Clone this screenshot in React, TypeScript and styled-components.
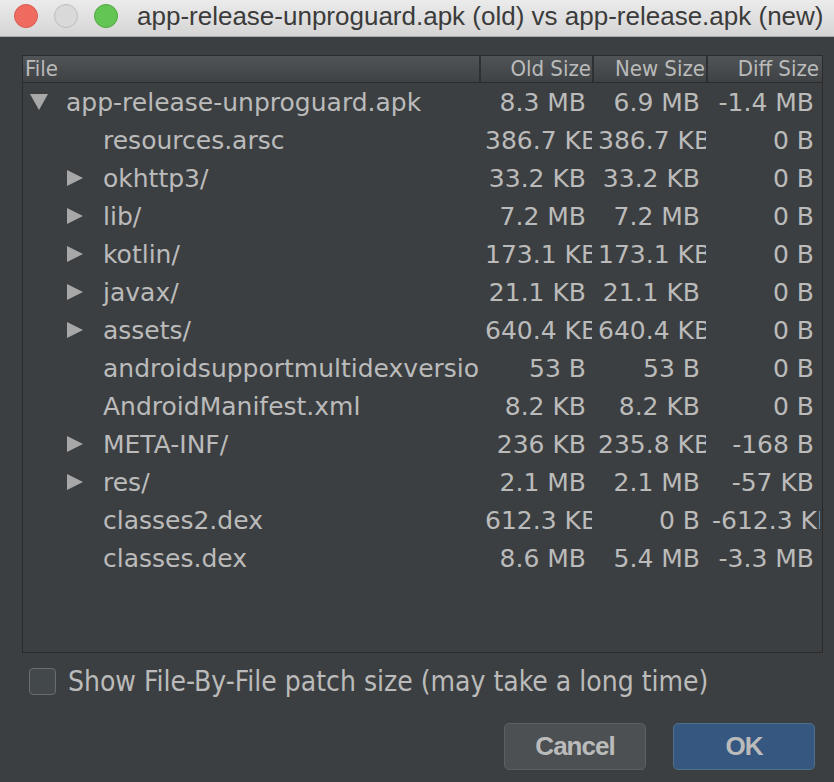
import React from 'react';
import styled, { createGlobalStyle } from 'styled-components';

interface Entry {
  name: string;
  level: number;
  toggle?: 'open' | 'closed';
  oldSize: string;
  newSize: string;
  diffSize: string;
}

const entries: Entry[] = [
  { name: 'app-release-unproguard.apk', level: 0, toggle: 'open', oldSize: '8.3 MB', newSize: '6.9 MB', diffSize: '-1.4 MB' },
  { name: 'resources.arsc', level: 1, oldSize: '386.7 KB', newSize: '386.7 KB', diffSize: '0 B' },
  { name: 'okhttp3/', level: 1, toggle: 'closed', oldSize: '33.2 KB', newSize: '33.2 KB', diffSize: '0 B' },
  { name: 'lib/', level: 1, toggle: 'closed', oldSize: '7.2 MB', newSize: '7.2 MB', diffSize: '0 B' },
  { name: 'kotlin/', level: 1, toggle: 'closed', oldSize: '173.1 KB', newSize: '173.1 KB', diffSize: '0 B' },
  { name: 'javax/', level: 1, toggle: 'closed', oldSize: '21.1 KB', newSize: '21.1 KB', diffSize: '0 B' },
  { name: 'assets/', level: 1, toggle: 'closed', oldSize: '640.4 KB', newSize: '640.4 KB', diffSize: '0 B' },
  { name: 'androidsupportmultidexversion.txt', level: 1, oldSize: '53 B', newSize: '53 B', diffSize: '0 B' },
  { name: 'AndroidManifest.xml', level: 1, oldSize: '8.2 KB', newSize: '8.2 KB', diffSize: '0 B' },
  { name: 'META-INF/', level: 1, toggle: 'closed', oldSize: '236 KB', newSize: '235.8 KB', diffSize: '-168 B' },
  { name: 'res/', level: 1, toggle: 'closed', oldSize: '2.1 MB', newSize: '2.1 MB', diffSize: '-57 KB' },
  { name: 'classes2.dex', level: 1, oldSize: '612.3 KB', newSize: '0 B', diffSize: '-612.3 KB' },
  { name: 'classes.dex', level: 1, oldSize: '8.6 MB', newSize: '5.4 MB', diffSize: '-3.3 MB' },
];

const GlobalStyle = createGlobalStyle`
  html, body {
    margin: 0;
    padding: 0;
    background: #3c3f41;
  }
  * {
    box-sizing: border-box;
  }
`;

const Window = styled.div`
  width: 834px;
  height: 782px;
  display: flex;
  flex-direction: column;
  background: #3c3f41;
  overflow: hidden;
`;

const TitleBar = styled.div`
  height: 37px;
  flex-shrink: 0;
  display: flex;
  align-items: center;
  padding-left: 14px;
  background: linear-gradient(#ebebeb, #d5d5d5);
  border-bottom: 1px solid #a9a9a9;
`;

const Lights = styled.div`
  display: flex;
  gap: 16px;
  margin-right: 19px;
  margin-top: -4px;
`;

const Light = styled.span<{ $fill: string; $edge: string }>`
  width: 24px;
  height: 24px;
  border-radius: 50%;
  background: ${({ $fill }) => $fill};
  border: 1px solid ${({ $edge }) => $edge};
`;

const Title = styled.div`
  font-family: 'Liberation Sans', Arial, sans-serif;
  font-size: 26px;
  color: #3b3b3b;
  white-space: nowrap;
  margin-top: -4px;
`;

const Body = styled.div`
  flex: 1;
  display: flex;
  flex-direction: column;
  padding: 18px 19px 12px 22px;
`;

const TablePanel = styled.div`
  width: 801px;
  height: 598px;
  border: 1px solid #2b2b2b;
  display: flex;
  flex-direction: column;
  overflow: hidden;
`;

const columns = '456px 113px 114px 114px 2px';

const HeaderRow = styled.div`
  display: grid;
  grid-template-columns: ${columns};
  height: 27px;
  background: linear-gradient(#505457, #3f4245);
  border-bottom: 1px solid #2b2b2b;
`;

const HeaderCell = styled.div<{ $align?: 'left' | 'right'; $divider?: boolean }>`
  font-family: 'DejaVu Sans Condensed', 'DejaVu Sans', sans-serif;
  font-stretch: condensed;
  font-size: 22px;
  color: #bbbbbb;
  line-height: 26px;
  white-space: nowrap;
  overflow: hidden;
  text-align: ${({ $align }) => $align ?? 'right'};
  padding: ${({ $align }) => ($align === 'left' ? '0 0 0 2px' : '0 1px 0 0')};
  border-left: ${({ $divider }) => ($divider ? '2px solid #2e3033' : 'none')};
`;

const Rows = styled.div`
  display: flex;
  flex-direction: column;
`;

const Row = styled.div`
  display: grid;
  grid-template-columns: ${columns};
  height: 38px;
  align-items: center;
`;

const cellFont = `
  font-family: 'DejaVu Sans', Verdana, sans-serif;
  font-size: 25px;
  color: #bbbbbb;
  white-space: nowrap;
  overflow: hidden;
`;

const NameCell = styled.div<{ $level: number }>`
  ${cellFont}
  display: flex;
  align-items: center;
  padding-left: ${({ $level }) => 7 + $level * 37}px;
`;

const ToggleSlot = styled.span`
  width: 36px;
  flex-shrink: 0;
  display: flex;
  align-items: center;
`;

const SizeCell = styled.div`
  ${cellFont}
  text-align: right;
  padding: 0 6px;
`;

const Toggle = ({ state }: { state?: 'open' | 'closed' }) => {
  if (!state) return <ToggleSlot />;
  return (
    <ToggleSlot>
      {state === 'open' ? (
        <svg width="18" height="16" viewBox="0 0 18 16">
          <path d="M0 0 H18 L9 16 Z" fill="#a8a8a8" />
        </svg>
      ) : (
        <svg width="16" height="16" viewBox="0 0 16 16">
          <path d="M0 0 L16 8 L0 16 Z" fill="#a8a8a8" />
        </svg>
      )}
    </ToggleSlot>
  );
};

const OptionRow = styled.label`
  display: flex;
  align-items: center;
  gap: 12px;
  margin: 12px 0 0 7px;
`;

const CheckBox = styled.span`
  width: 27px;
  height: 27px;
  flex-shrink: 0;
  border-radius: 4px;
  border: 1px solid #6a6d6f;
  background: #43494a;
`;

const OptionText = styled.span`
  font-family: 'DejaVu Sans Condensed', 'DejaVu Sans', sans-serif;
  font-stretch: condensed;
  font-size: 28px;
  color: #bbbbbb;
  white-space: nowrap;
`;

const Buttons = styled.div`
  display: flex;
  justify-content: flex-end;
  gap: 27px;
  margin-top: 25px;
`;

const DialogButton = styled.button<{ $primary?: boolean }>`
  width: 142px;
  height: 47px;
  border-radius: 5px;
  border: 1px solid ${({ $primary }) => ($primary ? '#4c708c' : '#5e6060')};
  background: ${({ $primary }) => ($primary ? '#365880' : '#4c5052')};
  color: #bbbbbb;
  font-family: 'Liberation Sans', Arial, sans-serif;
  font-weight: bold;
  font-size: 26px;
  letter-spacing: -1px;
  cursor: pointer;
`;

const App = () => {
  return (
    <Window>
      <GlobalStyle />
      <TitleBar>
        <Lights>
          <Light $fill="#ef6b60" $edge="#d85b51" />
          <Light $fill="#d9d9d9" $edge="#bdbdbd" />
          <Light $fill="#62c554" $edge="#50a83f" />
        </Lights>
        <Title>app-release-unproguard.apk (old) vs app-release.apk (new)</Title>
      </TitleBar>
      <Body>
        <TablePanel>
          <HeaderRow>
            <HeaderCell $align="left">File</HeaderCell>
            <HeaderCell $divider>Old Size</HeaderCell>
            <HeaderCell $divider>New Size</HeaderCell>
            <HeaderCell $divider>Diff Size</HeaderCell>
            <span />
          </HeaderRow>
          <Rows>
            {entries.map((entry) => (
              <Row key={entry.name}>
                <NameCell $level={entry.level}>
                  <Toggle state={entry.toggle} />
                  {entry.name}
                </NameCell>
                <SizeCell>{entry.oldSize}</SizeCell>
                <SizeCell>{entry.newSize}</SizeCell>
                <SizeCell>{entry.diffSize}</SizeCell>
                <span />
              </Row>
            ))}
          </Rows>
        </TablePanel>
        <OptionRow>
          <CheckBox />
          <OptionText>Show File-By-File patch size (may take a long time)</OptionText>
        </OptionRow>
        <Buttons>
          <DialogButton>Cancel</DialogButton>
          <DialogButton $primary>OK</DialogButton>
        </Buttons>
      </Body>
    </Window>
  );
};

export default App;
